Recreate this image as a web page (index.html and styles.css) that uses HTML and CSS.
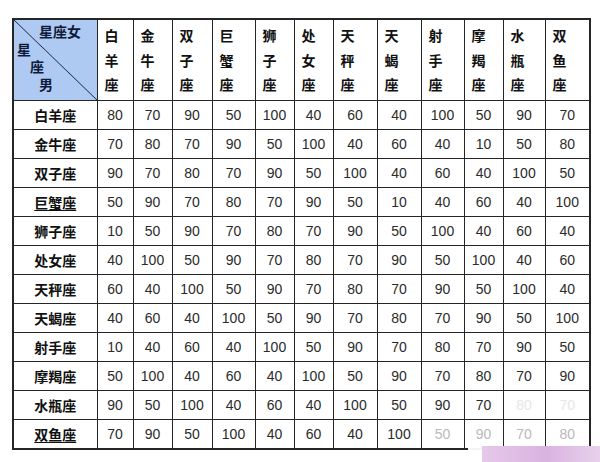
FILE: index.html
```html
<!DOCTYPE html>
<html lang="zh-CN">
<head>
<meta charset="utf-8">
<title>星座配对表</title>
<link rel="stylesheet" href="styles.css">
</head>
<body>
<div class="sheet">
<table class="grid">
<colgroup>
<col class="w84"><col class="w36"><col class="w39"><col class="w40"><col class="w43"><col class="w39"><col class="w39"><col class="w44"><col class="w44"><col class="w43"><col class="w39"><col class="w42"><col class="w45">
</colgroup>
<thead>
<tr class="head">
<th class="corner"><span class="f">星座女</span><span class="m1">星</span><span class="m2">座</span><span class="m3">男</span></th>
<th class="ch"><span>白</span><span>羊</span><span>座</span></th>
<th class="ch"><span>金</span><span>牛</span><span>座</span></th>
<th class="ch"><span>双</span><span>子</span><span>座</span></th>
<th class="ch"><span>巨</span><span>蟹</span><span>座</span></th>
<th class="ch"><span>狮</span><span>子</span><span>座</span></th>
<th class="ch"><span>处</span><span>女</span><span>座</span></th>
<th class="ch"><span>天</span><span>秤</span><span>座</span></th>
<th class="ch"><span>天</span><span>蝎</span><span>座</span></th>
<th class="ch"><span>射</span><span>手</span><span>座</span></th>
<th class="ch"><span>摩</span><span>羯</span><span>座</span></th>
<th class="ch"><span>水</span><span>瓶</span><span>座</span></th>
<th class="ch"><span>双</span><span>鱼</span><span>座</span></th>
</tr>
</thead>
<tbody>
<tr><th class="rh">白羊座</th><td>80</td><td>70</td><td>90</td><td>50</td><td>100</td><td>40</td><td>60</td><td>40</td><td>100</td><td>50</td><td>90</td><td>70</td></tr>
<tr><th class="rh">金牛座</th><td>70</td><td>80</td><td>70</td><td>90</td><td>50</td><td>100</td><td>40</td><td>60</td><td>40</td><td>10</td><td>50</td><td>80</td></tr>
<tr><th class="rh">双子座</th><td>90</td><td>70</td><td>80</td><td>70</td><td>90</td><td>50</td><td>100</td><td>40</td><td>60</td><td>40</td><td>100</td><td>50</td></tr>
<tr><th class="rh"><u>巨蟹座</u></th><td>50</td><td>90</td><td>70</td><td>80</td><td>70</td><td>90</td><td>50</td><td>10</td><td>40</td><td>60</td><td>40</td><td>100</td></tr>
<tr><th class="rh">狮子座</th><td>10</td><td>50</td><td>90</td><td>70</td><td>80</td><td>70</td><td>90</td><td>50</td><td>100</td><td>40</td><td>60</td><td>40</td></tr>
<tr><th class="rh">处女座</th><td>40</td><td>100</td><td>50</td><td>90</td><td>70</td><td>80</td><td>70</td><td>90</td><td>50</td><td>100</td><td>40</td><td>60</td></tr>
<tr><th class="rh">天秤座</th><td>60</td><td>40</td><td>100</td><td>50</td><td>90</td><td>70</td><td>80</td><td>70</td><td>90</td><td>50</td><td>100</td><td>40</td></tr>
<tr><th class="rh">天蝎座</th><td>40</td><td>60</td><td>40</td><td>100</td><td>50</td><td>90</td><td>70</td><td>80</td><td>70</td><td>90</td><td>50</td><td>100</td></tr>
<tr><th class="rh">射手座</th><td>10</td><td>40</td><td>60</td><td>40</td><td>100</td><td>50</td><td>90</td><td>70</td><td>80</td><td>70</td><td>90</td><td>50</td></tr>
<tr><th class="rh">摩羯座</th><td>50</td><td>100</td><td>40</td><td>60</td><td>40</td><td>100</td><td>50</td><td>90</td><td>70</td><td>80</td><td>70</td><td>90</td></tr>
<tr><th class="rh">水瓶座</th><td>90</td><td>50</td><td>100</td><td>40</td><td>60</td><td>40</td><td>100</td><td>50</td><td>90</td><td>70</td><td class="ghost">80</td><td class="ghost">70</td></tr>
<tr><th class="rh"><u>双鱼座</u></th><td>70</td><td>90</td><td>50</td><td>100</td><td>40</td><td>60</td><td>40</td><td>100</td><td class="faded">50</td><td class="faded">90</td><td class="faded">70</td><td class="faded">80</td></tr>
</tbody>
</table>
<div class="wm"></div>
</div>
</body>
</html>
```
FILE: styles.css
```css
html, body {
  margin: 0;
  background: #ffffff;
}
.sheet {
  position: relative;
  width: 600px;
  height: 462px;
  box-sizing: border-box;
  padding: 18px 0 0 12px;
  overflow: hidden;
}
.grid {
  border-collapse: collapse;
  table-layout: fixed;
  width: 577px;
  border: 2px solid #262626;
  font-family: "Liberation Sans", Arial, sans-serif;
}
.grid th, .grid td {
  border: 1px solid #262626;
  padding: 0;
}
.w84 { width: 84px; }
.w36 { width: 36px; }
.w39 { width: 39px; }
.w40 { width: 40px; }
.w42 { width: 42px; }
.w43 { width: 43px; }
.w44 { width: 44px; }
.w45 { width: 45px; }

.head th {
  height: 77px;
  vertical-align: top;
}
.corner {
  background: linear-gradient(to top right, #aecaf2 calc(50% - 0.8px), #2a3550 50%, #aecaf2 calc(50% + 0.8px));
  text-align: left;
  padding-top: 3px !important;
  font-family: "Noto Sans CJK SC", sans-serif;
  font-size: 14px;
  font-weight: 700;
  line-height: 17.5px;
  color: #0f1a3a;
}
.corner span { display: block; }
.corner .f { margin-left: 25px; }
.corner .m1 { margin-left: 3px; }
.corner .m2 { margin-left: 16px; }
.corner .m3 { margin-left: 25px; }

.ch {
  text-align: left;
  padding: 3px 0 0 7px !important;
  font-family: "Noto Sans CJK SC", sans-serif;
  font-size: 14px;
  font-weight: 700;
  line-height: 24.5px;
  color: #111;
}
.ch span { display: block; }

.grid tbody tr { height: 29px; }
.rh {
  font-family: "Noto Sans CJK SC", sans-serif;
  font-size: 14px;
  font-weight: 700;
  color: #111;
  text-align: center;
  vertical-align: middle;
}
.rh u { text-underline-offset: 2px; }
.grid td {
  text-align: center;
  vertical-align: middle;
  font-size: 14px;
  color: #2b2b2b;
}
.grid td.faded { color: #b9b9b9; }
.grid td.ghost { color: #e6e6e6; }

.wm {
  position: absolute;
  left: 468px;
  top: 446px;
  width: 132px;
  height: 16px;
  background: linear-gradient(to right, rgba(255,255,255,0.95) 0, rgba(255,255,255,0.95) 14px, #e6c9ea 14px, #d9b3e0 60%, #e8d2ec 100%);
}
```
